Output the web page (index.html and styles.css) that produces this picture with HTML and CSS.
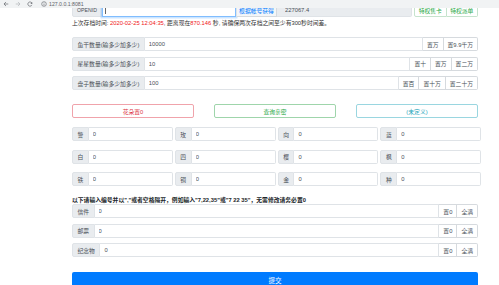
FILE: index.html
```html
<!DOCTYPE html>
<html lang="zh-CN">
<head>
<meta charset="utf-8">
<title>存档修改</title>
<link rel="stylesheet" href="styles.css">
</head>
<body>
<div class="chrome">
  <svg class="ic" viewBox="0 0 8 8"><path d="M7 4H1.5M4 1.3L1.3 4 4 6.7" fill="none" stroke="#5f6368" stroke-width="0.9"/></svg>
  <svg class="ic fwd" viewBox="0 0 8 8"><path d="M1 4h5.5M4 1.3L6.7 4 4 6.7" fill="none" stroke="#b0b3b7" stroke-width="0.9"/></svg>
  <svg class="ic" viewBox="0 0 8 8"><path d="M6.6 3.2A2.8 2.8 0 1 0 6.5 5.2" fill="none" stroke="#5f6368" stroke-width="0.9"/><path d="M6.9 1.2v2.4H4.5z" fill="#5f6368"/></svg>
  <svg class="ic info-ic" viewBox="0 0 8 8"><circle cx="4" cy="4" r="3.1" fill="none" stroke="#5f6368" stroke-width="0.8"/><path d="M4 3.5v2.4M4 2.2v0.6" stroke="#5f6368" stroke-width="0.8"/></svg>
  <span class="url">127.0.0.1:8081</span>
</div>
<div class="viewport">
  <div class="container">
    <div class="ig top">
      <span class="lbl">OPENID</span>
      <span class="inp focus"><span class="caret"></span></span>
      <button class="btn blue">根据帐号获得</button>
      <input class="inp ro" value="227067.4" readonly>
      <div class="pair">
        <button class="btn green first">特权售卡</button>
        <button class="btn green">特权派单</button>
      </div>
    </div>
    <p class="info">上次存档时间: <span class="red">2020-02-25 12:04:35</span>, 距离现在<span class="red">870.146</span> 秒, 请确保两次存档之间至少有300秒时间差。</p>

    <div class="ig">
      <span class="lbl">鱼干数量(输多少加多少)</span>
      <input class="inp" value="10000">
      <button class="btn">置万</button>
      <button class="btn">置9.9千万</button>
    </div>
    <div class="ig">
      <span class="lbl">星星数量(输多少加多少)</span>
      <input class="inp" value="10">
      <button class="btn">置十</button>
      <button class="btn">置万</button>
      <button class="btn">置二万</button>
    </div>
    <div class="ig">
      <span class="lbl">盘子数量(输多少加多少)</span>
      <input class="inp" value="100">
      <button class="btn">置百</button>
      <button class="btn">置十万</button>
      <button class="btn">置二十万</button>
    </div>

    <div class="actions">
      <button class="obtn o-red">花朵置0</button>
      <button class="obtn o-green">查询亲密</button>
      <button class="obtn o-cyan">(未定义)</button>
    </div>

    <div class="grid">
      <div class="ig"><span class="lbl">警</span><input class="inp" value="0"></div>
      <div class="ig"><span class="lbl">玫</span><input class="inp" value="0"></div>
      <div class="ig"><span class="lbl">向</span><input class="inp" value="0"></div>
      <div class="ig"><span class="lbl">蓝</span><input class="inp" value="0"></div>
      <div class="ig"><span class="lbl">白</span><input class="inp" value="0"></div>
      <div class="ig"><span class="lbl">四</span><input class="inp" value="0"></div>
      <div class="ig"><span class="lbl">樱</span><input class="inp" value="0"></div>
      <div class="ig"><span class="lbl">枫</span><input class="inp" value="0"></div>
      <div class="ig"><span class="lbl">铁</span><input class="inp" value="0"></div>
      <div class="ig"><span class="lbl">铜</span><input class="inp" value="0"></div>
      <div class="ig"><span class="lbl">金</span><input class="inp" value="0"></div>
      <div class="ig"><span class="lbl">种</span><input class="inp" value="0"></div>
    </div>

    <p class="note">以下请输入编号并以","或者空格隔开，例如输入"7,22,35"或"7 22 35"，无需修改请务必置0</p>

    <div class="ig">
      <span class="lbl">信件</span>
      <input class="inp" value="0">
      <button class="btn">置0</button>
      <button class="btn">全满</button>
    </div>
    <div class="ig">
      <span class="lbl">邮票</span>
      <input class="inp" value="0">
      <button class="btn">置0</button>
      <button class="btn">全满</button>
    </div>
    <div class="ig">
      <span class="lbl">纪念物</span>
      <input class="inp" value="0">
      <button class="btn">置0</button>
      <button class="btn">全满</button>
    </div>

    <button class="submit">提交</button>
  </div>
</div>
</body>
</html>
```

FILE: styles.css
```css
* {
  box-sizing: border-box;
  margin: 0;
  padding: 0;
}

html, body {
  width: 499px;
  height: 285px;
  overflow: hidden;
  background: #fff;
}

body {
  font-family: "Liberation Sans", "Noto Sans CJK SC", sans-serif;
  font-size: 5.8px;
  color: #212529;
}

.chrome {
  height: 8px;
  background: #f1f3f4;
  display: flex;
  align-items: center;
  padding-left: 3px;
}

.ic {
  width: 6px;
  height: 6px;
  margin-right: 6px;
}

.info-ic {
  margin-left: 2px;
  margin-right: 2px;
}

.url {
  font-size: 5.2px;
  color: #5f6368;
}

.viewport {
  height: 277px;
  overflow: hidden;
}

.container {
  width: 406px;
  margin-left: 72px;
  margin-top: -5px;
  display: flex;
  flex-direction: column;
}

.ig {
  display: flex;
  height: 14px;
  margin-bottom: 5.5px;
}

.lbl {
  display: flex;
  align-items: center;
  padding: 0 4.5px;
  background: #e9ecef;
  color: #495057;
  border: 1px solid #dfe3e7;
  border-radius: 2px 0 0 2px;
  white-space: nowrap;
}

.inp {
  flex: 1;
  min-width: 0;
  display: flex;
  align-items: center;
  height: 100%;
  padding: 0 4px;
  font: inherit;
  color: #495057;
  background: #fff;
  border: 1px solid #dfe3e7;
  border-left: 0;
  outline: none;
}

.ig .inp:last-child {
  border-radius: 0 2px 2px 0;
}

.btn {
  height: 100%;
  padding: 0 4px;
  font: inherit;
  color: #495057;
  background: #fff;
  border: 1px solid #d6dade;
  border-left: 0;
  white-space: nowrap;
}

.btn:last-child {
  border-radius: 0 2px 2px 0;
}

.top {
  margin-bottom: 0;
}

.top .lbl {
  width: 30px;
  padding: 0 3px;
  justify-content: center;
  font-size: 5.2px;
}

.top .focus {
  flex: 0 0 134px;
  border: 1px solid #80bdff;
  box-shadow: 0 0 0 1.5px rgba(0, 123, 255, 0.2);
  padding-left: 2px;
}

.caret {
  width: 0.7px;
  height: 7px;
  background: #666;
}

.btn.blue {
  width: 41px;
  padding: 0;
  color: #007bff;
  background: #f4f6f8;
  border-left: 1px solid #dfe3e7;
}

.top .ro {
  flex: 0 0 135px;
  background: #e9ecef;
  border-radius: 0 2px 2px 0;
  padding-left: 8px;
}

.pair {
  display: flex;
  margin-left: 2px;
  flex: 1;
}

.btn.green {
  flex: 1;
  padding: 0;
  color: #28a745;
  border-color: #c6e3cd;
}

.btn.green.first {
  border-left: 1px solid #c6e3cd;
  border-radius: 2px 0 0 2px;
}

.info {
  height: 10px;
  line-height: 10px;
  margin: 1px 0 9px;
  white-space: nowrap;
  color: #333;
}

.red {
  color: #f01818;
}

.actions {
  display: grid;
  grid-template-columns: repeat(3, 1fr);
  column-gap: 20px;
  margin-top: 8.5px;
  height: 14px;
}

.obtn {
  font: inherit;
  background: #fff;
  border: 1px solid;
  border-radius: 2px;
}

.o-red {
  color: #dc3545;
  border-color: #f0a3ab;
}

.o-green {
  color: #28a745;
  border-color: #9fd5ab;
}

.o-cyan {
  color: #17a2b8;
  border-color: #9ad6e0;
}

.grid {
  display: grid;
  grid-template-columns: repeat(4, 1fr);
  column-gap: 2px;
  row-gap: 8.5px;
  margin-top: 9px;
}

.grid .ig {
  margin-bottom: 0;
}

.note {
  height: 8px;
  line-height: 8px;
  margin-top: 10px;
  font-weight: bold;
  color: #212529;
  white-space: nowrap;
}

.submit {
  margin-top: 9.5px;
  height: 22px;
  font: inherit;
  font-size: 6.5px;
  color: #fff;
  background: #007bff;
  border: 0;
  border-radius: 2px;
  padding-bottom: 6px;
}
```
